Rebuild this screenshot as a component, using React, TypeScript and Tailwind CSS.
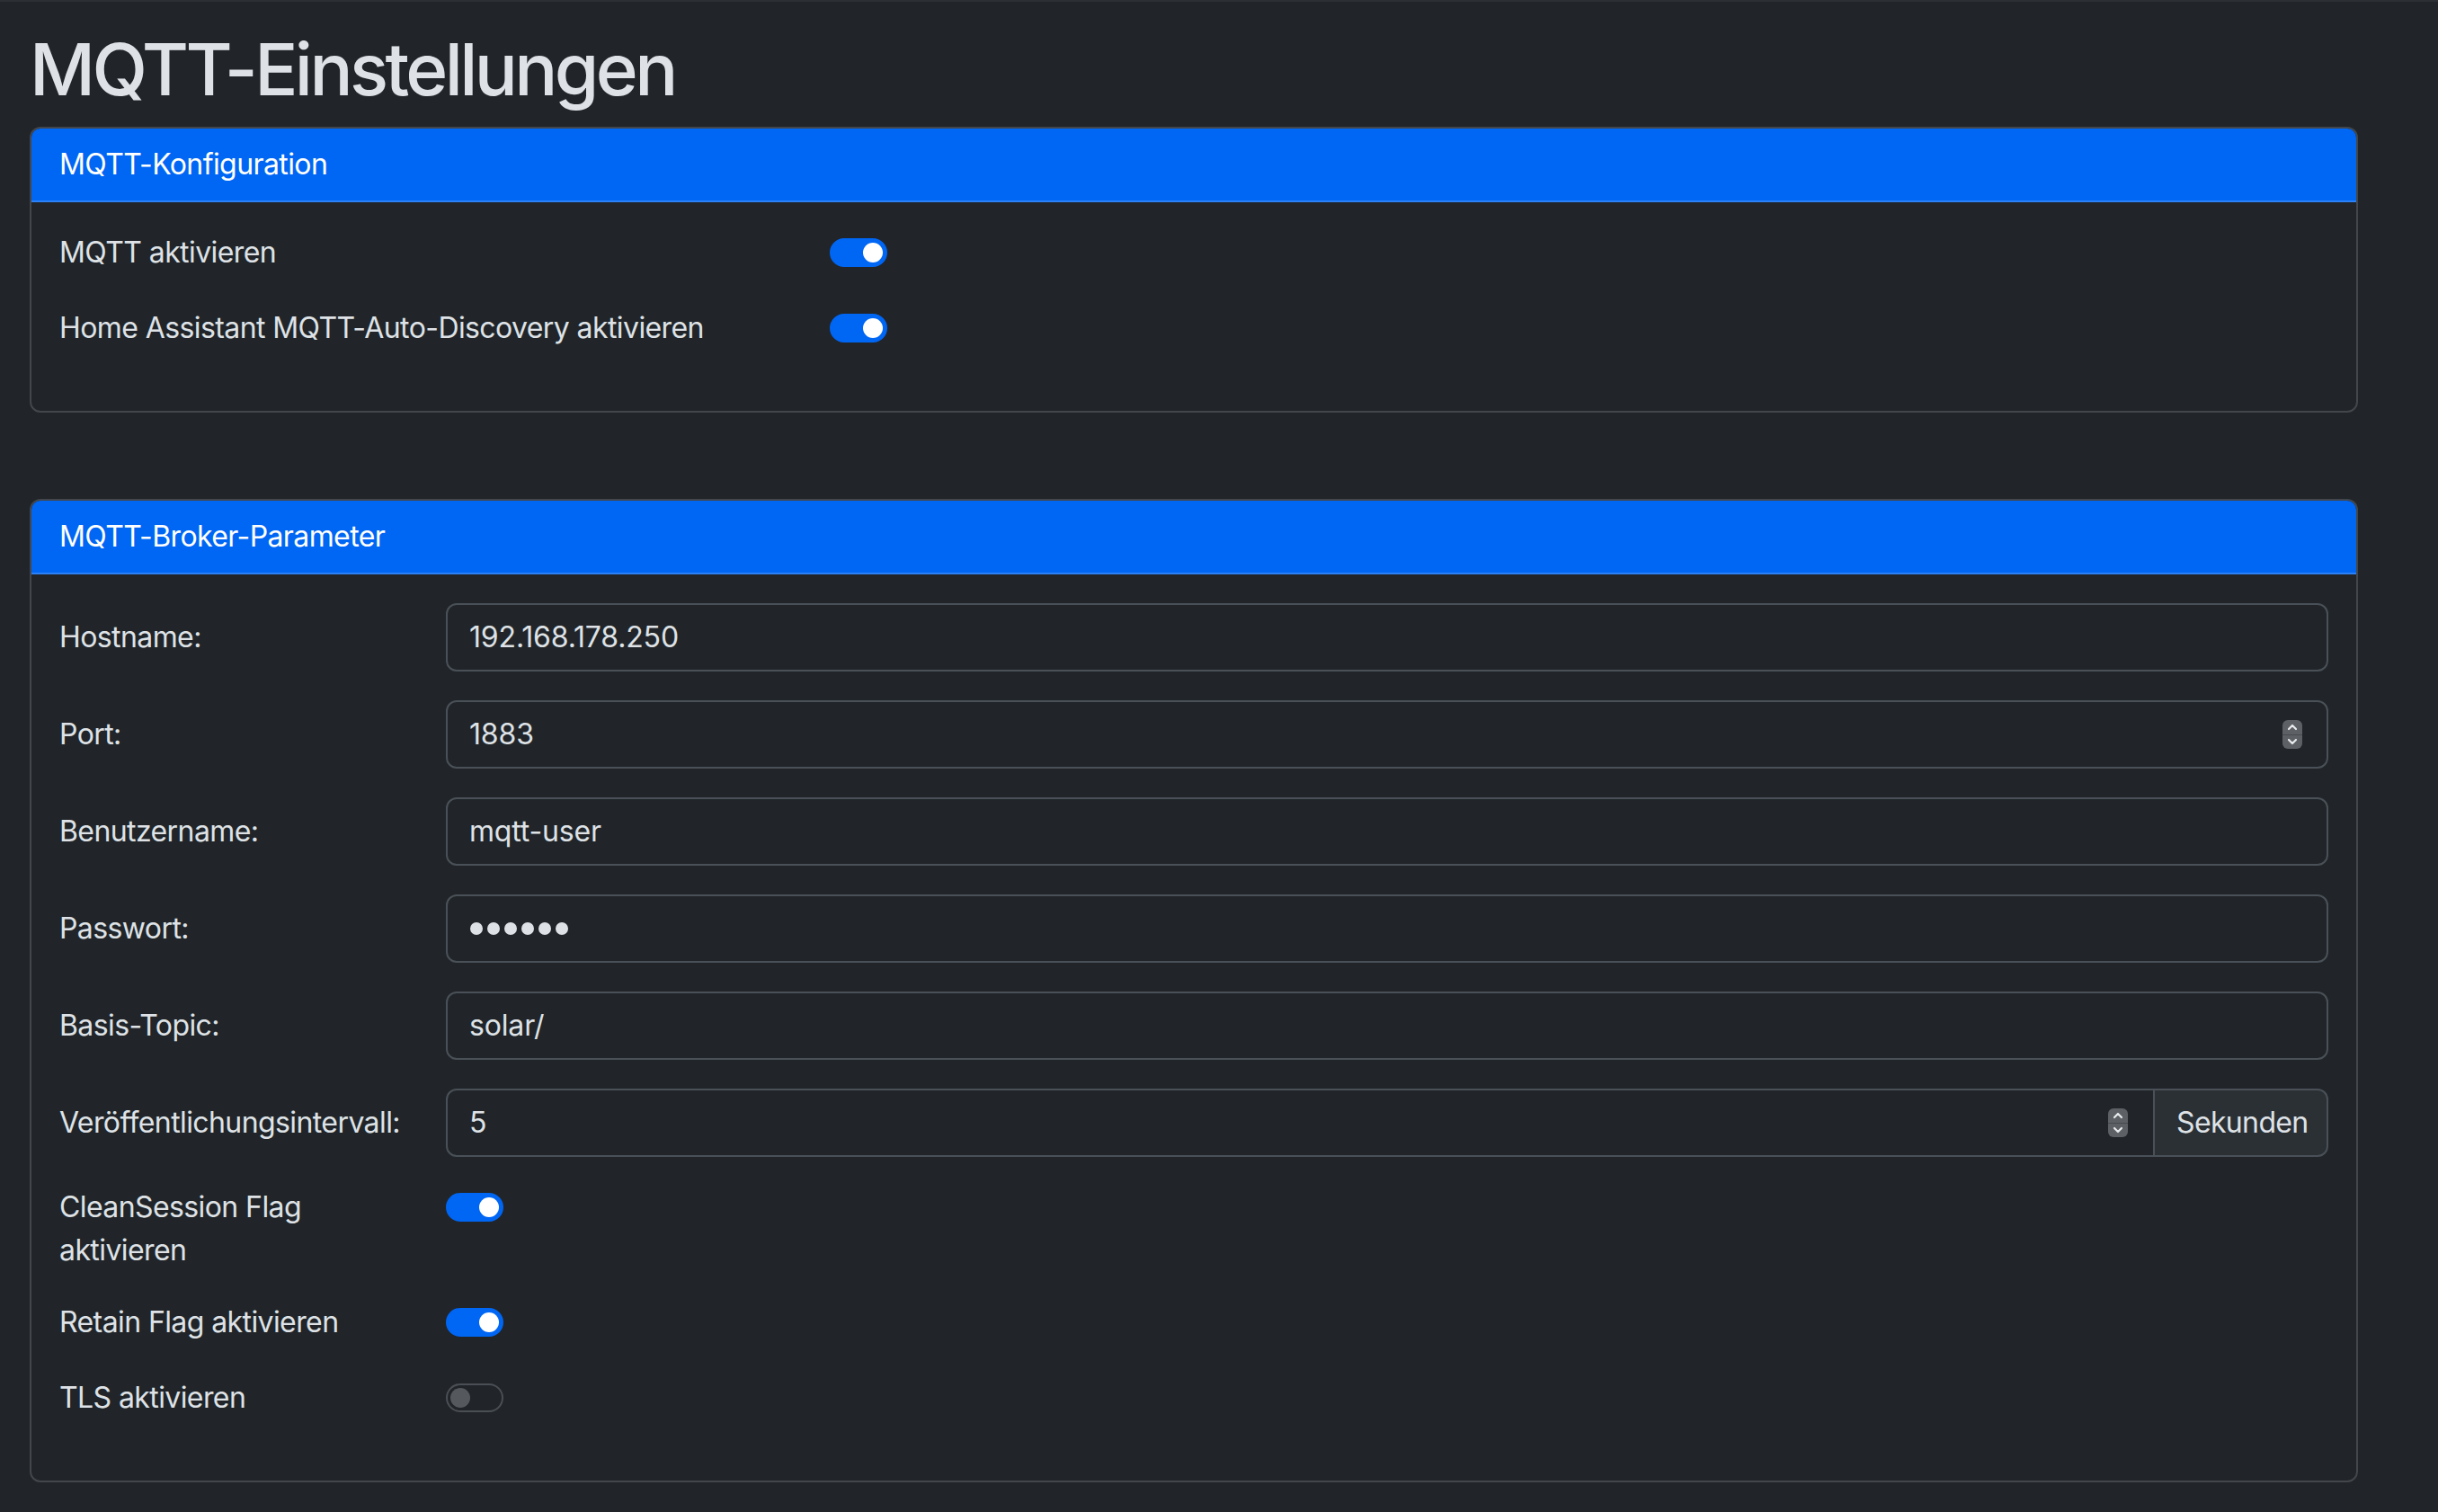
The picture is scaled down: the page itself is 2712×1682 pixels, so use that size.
import React from "react";

function Toggle({ on }: { on: boolean }) {
  if (on) {
    return (
      <div className="w-[64px] h-[32px] rounded-full bg-[#0066f4] border-2 border-[#0066f4] flex items-center justify-end pr-[3px] shrink-0">
        <div className="w-[22px] h-[22px] rounded-full bg-white" />
      </div>
    );
  }
  return (
    <div className="w-[64px] h-[32px] rounded-full bg-[#212529] border-2 border-[#4a4f55] flex items-center justify-start pl-[3px] shrink-0">
      <div className="w-[22px] h-[22px] rounded-full bg-[#55595d]" />
    </div>
  );
}

function Spinner() {
  return (
    <div className="w-[22px] h-[32px] rounded-[6px] bg-[#5d6166] flex flex-col overflow-hidden shrink-0">
      <div className="flex-1 flex items-center justify-center border-b border-[#474b50]">
        <svg width="12" height="8" viewBox="0 0 12 8" fill="none">
          <path d="M2 6 L6 2 L10 6" stroke="#e9eaeb" strokeWidth="2.2" strokeLinecap="round" strokeLinejoin="round" />
        </svg>
      </div>
      <div className="flex-1 flex items-center justify-center">
        <svg width="12" height="8" viewBox="0 0 12 8" fill="none">
          <path d="M2 2 L6 6 L10 2" stroke="#e9eaeb" strokeWidth="2.2" strokeLinecap="round" strokeLinejoin="round" />
        </svg>
      </div>
    </div>
  );
}

function Card({ title, children }: { title: string; children: React.ReactNode }) {
  return (
    <div className="w-[2590px] border-2 border-[#43474b] rounded-[12px] overflow-hidden">
      <div className="bg-[#0066f4] border-b-2 border-[#2d81f6] px-[31px] py-[16px] text-white text-[32px] leading-[48px]">
        {title}
      </div>
      <div className="px-[31px] pt-[32px] pb-[32px]">{children}</div>
    </div>
  );
}

function InputRow({
  label,
  children,
}: {
  label: string;
  children: React.ReactNode;
}) {
  return (
    <div className="flex items-center mb-[32px]">
      <label className="w-[430px] shrink-0 text-[32px] leading-[48px]">{label}</label>
      <div className="flex-1">{children}</div>
    </div>
  );
}

function TextBox({ value, spinner }: { value: string; spinner?: boolean }) {
  return (
    <div className="h-[76px] border-2 border-[#495057] rounded-[12px] flex items-center pl-[24px] pr-[27px]">
      <input
        readOnly
        value={value}
        className="flex-1 bg-transparent outline-none text-[32px] leading-[48px] text-[#dee2e6] tracking-[-0.005em]"
      />
      {spinner && <Spinner />}
    </div>
  );
}

function ToggleRow({ label, on, labelWidth }: { label: React.ReactNode; on: boolean; labelWidth: string }) {
  return (
    <div className="flex items-start mb-[32px]">
      <div className={`${labelWidth} shrink-0 text-[32px] leading-[48px]`}>{label}</div>
      <div className="pt-[8px] pb-[12px]">
        <Toggle on={on} />
      </div>
    </div>
  );
}

export default function App() {
  return (
    <div className="min-h-[1682px] w-full bg-[#212529] text-[#dee2e6] font-[Inter,'Noto_Sans',sans-serif] tracking-[-0.037em]">
      <div className="h-[2px] bg-[#2c3034]" />
      <div className="pl-[33px] pt-[27px]">
        <h1 className="text-[80px] leading-[96px] font-medium mb-[16px] tracking-[-0.045em]">
          MQTT-Einstellungen
        </h1>

        <Card title="MQTT-Konfiguration">
          <ToggleRow label="MQTT aktivieren" on labelWidth="w-[857px]" />
          <ToggleRow label="Home Assistant MQTT-Auto-Discovery aktivieren" on labelWidth="w-[857px]" />
        </Card>

        <div className="h-[96px]" />

        <Card title="MQTT-Broker-Parameter">
          <InputRow label="Hostname:">
            <TextBox value="192.168.178.250" />
          </InputRow>
          <InputRow label="Port:">
            <TextBox value="1883" spinner />
          </InputRow>
          <InputRow label="Benutzername:">
            <TextBox value="mqtt-user" />
          </InputRow>
          <InputRow label="Passwort:">
            <div className="h-[76px] border-2 border-[#495057] rounded-[12px] flex items-center pl-[25px] gap-[5px]">
              {[0, 1, 2, 3, 4, 5].map((i) => (
                <span key={i} className="w-[14px] h-[14px] rounded-full bg-[#dee2e6]" />
              ))}
            </div>
          </InputRow>
          <InputRow label="Basis-Topic:">
            <TextBox value="solar/" />
          </InputRow>
          <InputRow label="Veröffentlichungsintervall:">
            <div className="flex h-[76px]">
              <div className="flex-1 border-2 border-[#495057] rounded-l-[12px] flex items-center pl-[24px] pr-[28px]">
                <input
                  readOnly
                  value="5"
                  className="flex-1 bg-transparent outline-none text-[32px] leading-[48px] text-[#dee2e6]"
                />
                <Spinner />
              </div>
              <div className="w-[195px] -ml-[2px] border-2 border-[#495057] rounded-r-[12px] bg-[#2b3035] flex items-center px-[24px] text-[32px] leading-[48px] tracking-[-0.02em]">
                Sekunden
              </div>
            </div>
          </InputRow>
          <ToggleRow
            label={
              <>
                CleanSession Flag
                <br />
                aktivieren
              </>
            }
            on
            labelWidth="w-[430px]"
          />
          <ToggleRow label="Retain Flag aktivieren" on labelWidth="w-[430px]" />
          <ToggleRow label="TLS aktivieren" on={false} labelWidth="w-[430px]" />
        </Card>
      </div>
    </div>
  );
}
